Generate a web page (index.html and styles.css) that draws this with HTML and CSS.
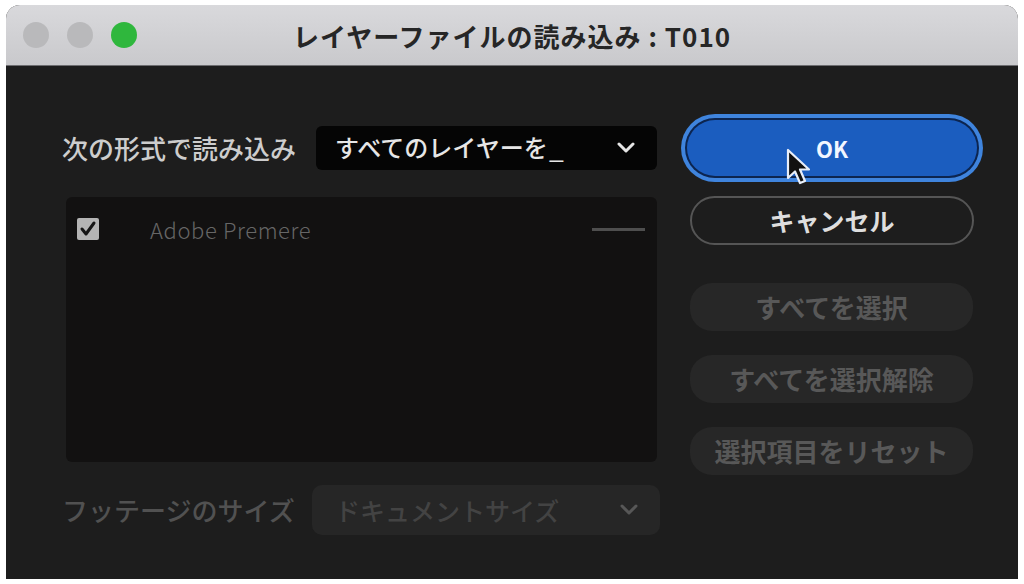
FILE: index.html
```html
<!DOCTYPE html>
<html lang="ja">
<head>
<meta charset="utf-8">
<title>レイヤーファイルの読み込み</title>
<link rel="stylesheet" href="styles.css">
</head>
<body>
<div class="window">
  <div class="titlebar">
    <div class="lights">
      <span class="light gray"></span>
      <span class="light gray"></span>
      <span class="light green"></span>
    </div>
    <div class="title">レイヤーファイルの読み込み : T010</div>
    <div></div>
  </div>
  <div class="content">
    <div class="left">
      <div class="row">
        <span class="label">次の形式で読み込み</span>
        <div class="select select-main">
          <span>すべてのレイヤーを<span class="ell">_</span></span>
          <svg class="chev" width="18" height="12" viewBox="0 0 18 12"><path d="M2 2 L9 9 L16 2" fill="none" stroke="#e6e6e6" stroke-width="3" stroke-linecap="round" stroke-linejoin="round"/></svg>
        </div>
      </div>
      <div class="list">
        <div class="list-row">
          <span class="check">
            <svg width="22" height="22" viewBox="0 0 22 22"><rect x="0" y="0" width="22" height="22" rx="2" fill="#b4b4b4"/><path d="M5 11 L9 16 L17 5" fill="none" stroke="#161616" stroke-width="3" stroke-linecap="round" stroke-linejoin="round"/></svg>
          </span>
          <span class="item-name">Adobe Premere</span>
          <span class="dash"></span>
        </div>
      </div>
      <div class="row row-bottom">
        <span class="label dim">フッテージのサイズ</span>
        <div class="select select-dis">
          <span>ドキュメントサイズ</span>
          <svg class="chev" width="18" height="12" viewBox="0 0 18 12"><path d="M2 2 L9 9 L16 2" fill="none" stroke="#575757" stroke-width="3" stroke-linecap="round" stroke-linejoin="round"/></svg>
        </div>
      </div>
    </div>
    <div class="right">
      <button class="btn btn-ok">OK</button>
      <button class="btn btn-cancel">キャンセル</button>
      <button class="btn btn-dis first">すべてを選択</button>
      <button class="btn btn-dis">すべてを選択解除</button>
      <button class="btn btn-dis">選択項目をリセット</button>
    </div>
  </div>
  <svg class="cursor" width="26" height="38" viewBox="0 0 26 38"><path d="M2 2 L2 30 L9 23.5 L14 35 L19 33 L14 21.5 L23 21.5 Z" fill="#111" stroke="#e8eef8" stroke-width="2.2" stroke-linejoin="round"/></svg>
</div>
</body>
</html>
```

FILE: styles.css
```css
* { box-sizing: border-box; }
html, body { margin: 0; padding: 0; }
body {
  background: #ffffff;
  width: 1024px;
  height: 584px;
  overflow: hidden;
  font-family: "Noto Sans CJK JP", "Noto Sans", sans-serif;
}
.window {
  position: relative;
  margin: 5px 6px 0 6px;
  width: 1012px;
  height: 574px;
  border-radius: 14px 14px 0 0;
  overflow: hidden;
  display: flex;
  flex-direction: column;
  background: #1d1d1d;
}
.titlebar {
  height: 61px;
  flex: none;
  background: linear-gradient(#d9d9dc, #c9c9cc);
  border-bottom: 1px solid #6d6d70;
  display: grid;
  grid-template-columns: 1fr auto 1fr;
  align-items: center;
}
.lights {
  display: flex;
  gap: 18px;
  padding-left: 17px;
}
.light {
  width: 26px;
  height: 26px;
  border-radius: 50%;
  display: block;
}
.light.gray { background: #b9b9bb; }
.light.green { background: #2fb73d; }
.title {
  font-size: 26px;
  font-weight: 700;
  color: #262626;
  letter-spacing: 1px;
  padding-left: 0;
}
.content {
  flex: 1;
  display: flex;
  align-items: flex-start;
  padding: 54px 0 0 56px;
  gap: 27px;
}
.left {
  width: 598px;
  padding-top: 6px;
  display: flex;
  flex-direction: column;
}
.row {
  display: flex;
  align-items: center;
}
.label {
  font-size: 26px;
  font-weight: 500;
  color: #cdcdcd;
  line-height: 1;
}
.label.dim { color: #515151; }
.select {
  margin-left: auto;
  display: flex;
  align-items: center;
  justify-content: space-between;
  font-size: 24px;
  line-height: 1;
  font-weight: 500;
}
.select-main {
  width: 341px;
  height: 44px;
  margin-right: 3px;
  background: #050505;
  border-radius: 6px;
  padding: 0 22px 0 19px;
  color: #e6e6e6;
}
.ell { font-family: "Liberation Sans", sans-serif; margin-left: 2px; }
.select-dis {
  width: 348px;
  height: 50px;
  background: #262626;
  border-radius: 10px;
  padding: 0 22px 0 23px;
  color: #434343;
  font-size: 25px;
}
.list {
  margin: 27px 0 0 4px;
  width: 591px;
  height: 265px;
  background: #121111;
  border-radius: 6px;
}
.list-row {
  display: flex;
  align-items: center;
  height: 64px;
  padding: 0 12px 0 11px;
}
.check { display: flex; width: 22px; height: 22px; }
.item-name {
  margin-left: 51px;
  font-size: 22px;
  font-weight: 300;
  color: #666666;
  letter-spacing: 0.6px;
}
.dash {
  margin-left: auto;
  width: 53px;
  height: 3px;
  background: #4e4e4e;
}
.row-bottom { margin-top: 23px; }
.right {
  width: 290px;
  display: flex;
  flex-direction: column;
}
.btn {
  font-family: inherit;
  font-weight: 700;
  border: none;
  border-radius: 28px;
  padding: 0;
  line-height: 1;
}
.btn-ok {
  height: 56px;
  background: #1b5dbf;
  color: #f2f6ff;
  font-size: 22px;
  box-shadow: 0 0 0 2px #0c2550, 0 0 0 6px #3f84dd;
}
.btn-cancel {
  margin: 20px 3px 0 3px;
  height: 49px;
  background: transparent;
  border: 2px solid #555555;
  color: #dedede;
  font-size: 25px;
}
.btn-dis {
  margin: 24px 4px 0 3px;
  height: 48px;
  background: #272727;
  color: #585858;
  font-size: 26px;
  border-radius: 22px;
}
.btn-dis.first { margin-top: 38px; }
.cursor {
  position: absolute;
  left: 780px;
  top: 143px;
}
```
